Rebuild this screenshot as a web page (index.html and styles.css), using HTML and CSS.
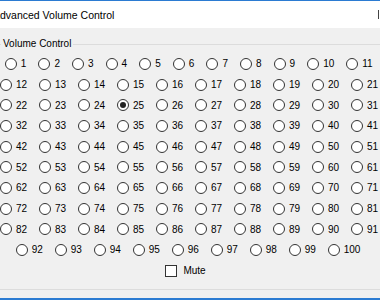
FILE: index.html
```html
<!DOCTYPE html>
<html lang="en">
<head>
    <meta charset="UTF-8">
    <title>Advanced Volume Control</title>
    <link rel="stylesheet" href="styles.css">
</head>
<body>

<div class="window">
    <div class="titlebar">
        <span class="title">Advanced Volume Control</span>
        <span class="caption-btn"></span>
    </div>

    <fieldset class="group">
        <legend>Volume Control</legend>
        <div class="rows" id="rows"></div>
        <div class="row mute-row">
            <label class="check"><span class="box"></span><span>Mute</span></label>
        </div>
    </fieldset>

    <div class="bottom-edge"></div>
</div>

<script>
    const rowRanges = [[1, 11], [12, 21], [22, 31], [32, 41], [42, 51], [52, 61], [62, 71], [72, 81], [82, 91], [92, 100]];
    const rows = document.getElementById('rows');
    rowRanges.forEach(function (range) {
        const row = document.createElement('div');
        row.className = 'row';
        for (let n = range[0]; n <= range[1]; n++) {
            const digits = String(n).length;
            const opt = document.createElement('label');
            opt.className = 'opt w' + digits;
            opt.innerHTML = '<span class="dot' + (n === 25 ? ' checked' : '') + '"></span><span>' + n + '</span>';
            row.appendChild(opt);
        }
        rows.appendChild(row);
    });
</script>

</body>
</html>
```

FILE: styles.css
```css
body {
    margin: 0;
    background-color: #f0f0f0;
    font-family: "Liberation Sans", Arial, sans-serif;
    font-size: 10px;
    color: #000;
}
.window {
    width: 380px;
    height: 300px;
    overflow: hidden;
    display: flex;
    flex-direction: column;
}
.titlebar {
    height: 27px;
    border-top: 1px solid #2b7bd2;
    background-color: #fff;
    display: flex;
    align-items: center;
    flex-shrink: 0;
}
.title {
    margin-left: -7px;
    font-size: 10.5px;
    white-space: nowrap;
}
.caption-btn {
    margin-left: auto;
    margin-right: 1px;
    width: 1px;
    height: 9px;
    background-color: #444;
}
.group {
    margin: 10px 0 0 0;
    padding: 3.67px 0 8px 0;
    border: none;
    border-top: 1px solid #dcdcdc;
    border-bottom: 1px solid #dcdcdc;
    min-width: 0;
    flex-shrink: 0;
}
.group legend {
    margin-left: 1px;
    padding: 0 2px;
    line-height: 12px;
}
.rows {
    display: flex;
    flex-direction: column;
}
.row {
    height: 20.667px;
    display: flex;
    justify-content: center;
    align-items: center;
}
.opt {
    display: flex;
    align-items: center;
    flex-shrink: 0;
}
.opt.w1 { width: 33.6px; }
.opt.w2 { width: 39px; }
.opt.w3 { width: 46.6px; }
.dot {
    width: 10px;
    height: 10px;
    margin-left: 5px;
    margin-right: 4px;
    border: 1px solid #333;
    border-radius: 50%;
    background-color: #fff;
    display: flex;
    align-items: center;
    justify-content: center;
}
.dot.checked::after {
    content: "";
    width: 6px;
    height: 6px;
    border-radius: 50%;
    background-color: #222;
}
.mute-row {
    padding-right: 9px;
}
.check {
    display: flex;
    align-items: center;
}
.box {
    width: 10px;
    height: 10px;
    margin-right: 6px;
    border: 1px solid #333;
    background-color: #fff;
}
.bottom-edge {
    margin-top: auto;
    height: 2px;
    background-color: #2b7bd2;
}
```
